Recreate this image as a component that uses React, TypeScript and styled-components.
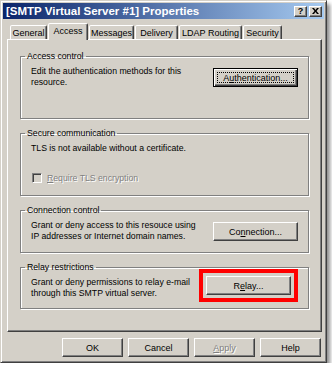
import React from 'react';
import styled, { createGlobalStyle } from 'styled-components';

const GlobalStyle = createGlobalStyle`
  html, body {
    margin: 0;
    padding: 0;
    background: #fff;
  }
  body {
    font-family: "Liberation Sans", Arial, sans-serif;
    font-size: 8.7px;
    color: #000;
  }
`;

// Window frame
const Window = styled.div`
  box-sizing: border-box;
  width: 327px;
  height: 363px;
  padding: 2px;
  background: #d4d0c8;
  border: 1px solid;
  border-color: #d4d0c8 #404040 #404040 #d4d0c8;
  box-shadow: inset 1px 1px 0 #fff, inset -1px -1px 0 #808080, 3px 4px 4px rgba(0, 0, 0, 0.45);
  display: flex;
  flex-direction: column;
`;

const TitleBar = styled.div`
  height: 16px;
  display: flex;
  align-items: center;
  padding: 0 2px 0 3px;
  background: linear-gradient(to right, #0a246a, #a6caf0);
`;

const TitleText = styled.div`
  flex: 1;
  color: #fff;
  font-weight: bold;
  font-size: 11.5px;
  white-space: nowrap;
`;

const CaptionButton = styled.div`
  box-sizing: border-box;
  width: 13px;
  height: 11px;
  margin-left: 2px;
  display: flex;
  align-items: center;
  justify-content: center;
  background: #d4d0c8;
  border: 1px solid;
  border-color: #fff #404040 #404040 #fff;
  box-shadow: inset -1px -1px 0 #808080;
  font-size: 9px;
  font-weight: bold;
  line-height: 1;
`;

const Body = styled.div`
  flex: 1;
  display: flex;
  flex-direction: column;
  padding: 4px 2px 0 4px;
`;

// Tabs
const TabRow = styled.div`
  display: flex;
  gap: 1px;
  height: 16px;
  padding-left: 3px;
  position: relative;
  z-index: 1;
`;

const Tab = styled.div<{ $w: number; $active?: boolean }>`
  box-sizing: border-box;
  width: ${p => p.$w}px;
  height: ${p => (p.$active ? 17 : 14)}px;
  margin-top: ${p => (p.$active ? 0 : 2)}px;
  display: flex;
  align-items: center;
  justify-content: center;
  padding-bottom: ${p => (p.$active ? 2 : 0)}px;
  background: #d4d0c8;
  border: 1px solid;
  border-bottom: none;
  border-color: #fff #404040 transparent #fff;
  border-radius: 2px 2px 0 0;
  box-shadow: inset -1px 0 0 #808080;
  font-size: 9px;
  white-space: nowrap;
`;

const Panel = styled.div`
  box-sizing: border-box;
  width: 315px;
  height: 293px;
  padding: 10px 11px 0 12px;
  border: 1px solid;
  border-color: #fff #404040 #404040 #fff;
  box-shadow: inset -1px -1px 0 #808080;
  display: flex;
  flex-direction: column;
  gap: 8px;
`;

// Group boxes
const Group = styled.fieldset<{ $h: number }>`
  box-sizing: border-box;
  width: 289px;
  height: ${p => p.$h}px;
  margin: 0;
  padding: 0 10px 0 10px;
  min-inline-size: 0;
  border: 1px solid #808080;
  box-shadow: inset 1px 1px 0 #fff, 1px 1px 0 #fff;
`;

const Legend = styled.legend`
  margin-left: -6px;
  padding: 0 2px;
  line-height: 12px;
`;

const GroupRow = styled.div`
  display: flex;
  justify-content: space-between;
  align-items: flex-start;
`;

const Text = styled.div`
  padding-top: 4px;
  line-height: 11px;
  white-space: nowrap;
`;

const CheckRow = styled.label`
  display: flex;
  align-items: center;
  gap: 5px;
  margin-top: 19px;
  padding-left: 1px;
  color: #808080;
  text-shadow: 1px 1px 0 #fff;
`;

const CheckBox = styled.span`
  box-sizing: border-box;
  width: 10px;
  height: 10px;
  background: #d4d0c8;
  border: 1px solid;
  border-color: #808080 #fff #fff #808080;
  box-shadow: inset 1px 1px 0 #404040, inset -1px -1px 0 #d4d0c8;
`;

// Buttons
const Button = styled.div<{ $w?: number; $default?: boolean; $disabled?: boolean; $top?: number }>`
  box-sizing: border-box;
  width: ${p => p.$w ?? 85}px;
  height: 19px;
  margin-top: ${p => p.$top ?? 0}px;
  position: relative;
  display: flex;
  align-items: center;
  justify-content: center;
  background: #d4d0c8;
  border: 1px solid;
  border-color: ${p => (p.$default ? '#000' : '#fff #404040 #404040 #fff')};
  box-shadow: ${p =>
    p.$default
      ? 'inset 1px 1px 0 #fff, inset -1px -1px 0 #404040, inset -2px -2px 0 #808080'
      : 'inset -1px -1px 0 #808080'};
  color: ${p => (p.$disabled ? '#808080' : '#000')};
  text-shadow: ${p => (p.$disabled ? '1px 1px 0 #fff' : 'none')};
  font-size: 9px;
  white-space: nowrap;

  ${p =>
    p.$default &&
    `
    &::after {
      content: '';
      position: absolute;
      inset: 3px;
      border: 1px dotted #000;
    }
  `}
`;

const Highlight = styled.div<{ $top?: number }>`
  margin-top: ${p => p.$top ?? 0}px;
  padding: 3px;
  border: 4px solid #ff0000;
`;

const Footer = styled.div`
  display: flex;
  justify-content: flex-end;
  gap: 5px;
  margin-top: 6px;
  padding-right: 1px;
`;

const U = styled.span`
  text-decoration: underline;
`;

const CloseIcon = () => (
  <svg width="7" height="6" viewBox="0 0 7 6">
    <path d="M0 0h2l1.5 2L5 0h2L4.5 3 7 6H5L3.5 4 2 6H0l2.5-3z" fill="#000" />
  </svg>
);

const tabs = [
  { label: 'General', w: 37 },
  { label: 'Access', w: 40, active: true },
  { label: 'Messages', w: 45 },
  { label: 'Delivery', w: 43 },
  { label: 'LDAP Routing', w: 63 },
  { label: 'Security', w: 39 },
];

const App: React.FC = () => {
  return (
    <>
      <GlobalStyle />
      <Window>
        <TitleBar>
          <TitleText>[SMTP Virtual Server #1] Properties</TitleText>
          <CaptionButton>?</CaptionButton>
          <CaptionButton>
            <CloseIcon />
          </CaptionButton>
        </TitleBar>
        <Body>
          <TabRow>
            {tabs.map(t => (
              <Tab key={t.label} $w={t.w} $active={t.active}>
                {t.label}
              </Tab>
            ))}
          </TabRow>
          <Panel>
            <Group $h={69}>
              <Legend>Access control</Legend>
              <GroupRow>
                <Text>
                  Edit the authentication methods for this
                  <br />
                  resource.
                </Text>
                <Button $default $top={6}>
                  A<U>u</U>thentication...
                </Button>
              </GroupRow>
            </Group>

            <Group $h={69}>
              <Legend>Secure communication</Legend>
              <Text>TLS is not available without a certificate.</Text>
              <CheckRow>
                <CheckBox />
                <span>
                  <U>R</U>equire TLS encryption
                </span>
              </CheckRow>
            </Group>

            <Group $h={49}>
              <Legend>Connection control</Legend>
              <GroupRow>
                <Text>
                  Grant or deny access to this resouce using
                  <br />
                  IP addresses or Internet domain names.
                </Text>
                <Button $top={6}>
                  Co<U>n</U>nection...
                </Button>
              </GroupRow>
            </Group>

            <Group $h={48}>
              <Legend>Relay restrictions</Legend>
              <GroupRow>
                <Text>
                  Grant or deny permissions to relay e-mail
                  <br />
                  through this SMTP virtual server.
                </Text>
                <Highlight $top={-4}>
                  <Button>
                    R<U>e</U>lay...
                  </Button>
                </Highlight>
              </GroupRow>
            </Group>
          </Panel>
          <Footer>
            <Button $w={61}>OK</Button>
            <Button $w={61}>Cancel</Button>
            <Button $w={61} $disabled>
              <U>A</U>pply
            </Button>
            <Button $w={61}>Help</Button>
          </Footer>
        </Body>
      </Window>
    </>
  );
};

export default App;
